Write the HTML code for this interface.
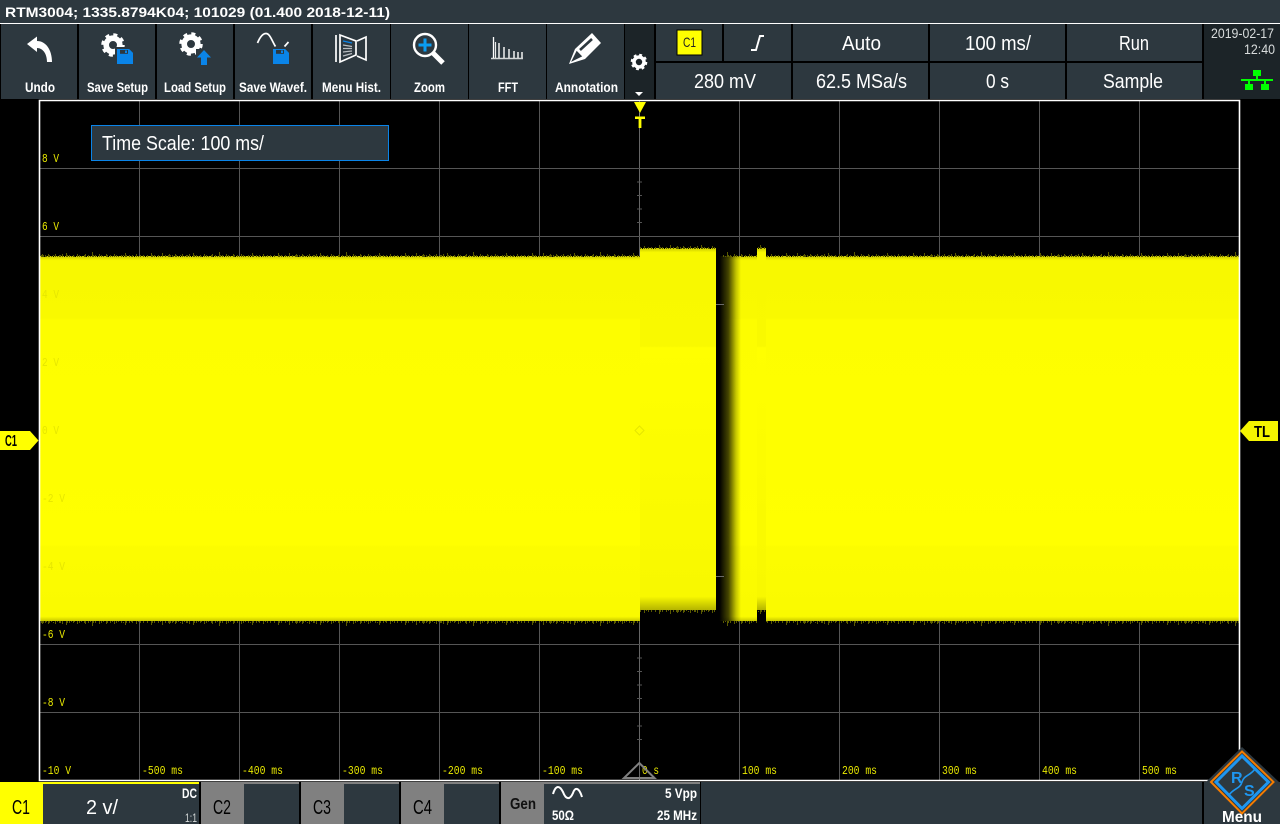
<!DOCTYPE html>
<html><head><meta charset="utf-8"><title>RTM3004</title>
<style>
html,body{margin:0;padding:0;background:#000;width:1280px;height:824px;overflow:hidden}
svg{display:block}
text{font-family:"Liberation Sans",sans-serif;white-space:pre}
.lb{font-size:14px;font-weight:700;fill:#fff}
.v{font-size:20px;fill:#fff}
.s{font-size:12px;fill:#e8e800;font-family:"Liberation Mono","Liberation Sans",monospace}
.ch{font-size:20px;fill:#000}
</style></head><body>
<svg xmlns="http://www.w3.org/2000/svg" width="1280" height="824" viewBox="0 0 1280 824">
<defs>
<linearGradient id="vg" gradientUnits="userSpaceOnUse" x1="0" y1="256" x2="0" y2="622">
<stop offset="0" stop-color="#c8c800"/><stop offset=".012" stop-color="#f8f800"/><stop offset=".17" stop-color="#f9f900"/><stop offset=".175" stop-color="#fdfd00"/><stop offset=".79" stop-color="#ffff00"/><stop offset=".795" stop-color="#fcfc00"/><stop offset=".985" stop-color="#fafa00"/><stop offset="1" stop-color="#c0c000"/>
</linearGradient>
<linearGradient id="vg2" gradientUnits="userSpaceOnUse" x1="0" y1="248" x2="0" y2="611">
<stop offset="0" stop-color="#c8c800"/><stop offset=".012" stop-color="#f8f800"/><stop offset=".27" stop-color="#f9f900"/><stop offset=".275" stop-color="#ffff00"/><stop offset=".96" stop-color="#f8f800"/><stop offset="1" stop-color="#b0b000"/>
</linearGradient>
<linearGradient id="gap" gradientUnits="userSpaceOnUse" x1="716" y1="0" x2="741" y2="0">
<stop offset="0" stop-color="#000"/><stop offset=".14" stop-color="#000"/><stop offset=".5" stop-color="#000" stop-opacity=".72"/><stop offset=".8" stop-color="#000" stop-opacity=".22"/><stop offset="1" stop-color="#000" stop-opacity="0"/>
</linearGradient>
<pattern id="n" patternUnits="userSpaceOnUse" width="127" height="9" x="40" y="0">
<path stroke="#5a5a00" stroke-width="1" fill="none" d="M1.500 7v2M2.500 6v3M3.500 7v2M5.500 7v2M6.500 8v1M8.500 6v3M9.500 7v2M11.500 8v1M13.500 7v2M15.500 6v3M17.500 8v1M19.500 7v2M20.500 7v2M22.500 6v3M24.500 8v1M26.500 5v4M27.500 7v2M29.500 7v2M31.500 8v1M33.500 7v2M34.500 8v1M37.500 6v3M39.500 7v2M41.500 8v1M44.500 7v2M45.500 6v3M48.500 7v2M50.500 8v1M52.500 4v5M53.500 7v2M55.500 7v2M57.500 8v1M59.500 6v3M61.500 7v2M63.500 8v1M66.500 6v3M67.500 7v2M70.500 7v2M72.500 8v1M74.500 6v3M76.500 7v2M78.500 8v1M81.500 7v2M83.500 7v2M85.500 5v4M86.500 7v2M89.500 7v2M91.500 8v1M92.500 7v2M96.500 6v3M98.500 8v1M100.500 7v2M103.500 7v2M105.500 8v1M107.500 7v2M111.500 5v4M112.500 7v2M114.500 7v2M118.500 7v2M120.500 8v1M122.500 5v4M125.500 7v2"/>
<path stroke="#000" stroke-width="1" fill="none" d="M4.500 8v1M13.500 8v1M24.500 7v2M35.500 8v1M46.500 8v1M57.500 7v2M68.500 8v1M83.500 8v1M94.500 7v2M105.500 8v1M116.500 8v1"/>
</pattern>
<g id="disk"><path d="M0 0h12l4 4v11H0z" fill="#0a84e8"/><rect x="3" y="0.8" width="8" height="4" fill="#2d383f"/><rect x="8" y="1.5" width="2" height="2.5" fill="#0a84e8"/><rect x="2" y="7" width="12" height="7" fill="#0a84e8"/><path d="M.5.5h11.3l3.7 3.7v10.3H.5z" fill="none" stroke="#0a84e8"/></g>
</defs>

<rect width="1280" height="824" fill="#000"/>
<!-- top title -->
<rect width="1280" height="23" fill="#2d383f"/>
<rect y="23" width="1280" height="1" fill="#fff"/>
<text x="5" y="17" lengthAdjust="spacingAndGlyphs" textLength="385" style="font-size:14px;font-weight:700;fill:#fff">RTM3004; 1335.8794K04; 101029 (01.400 2018-12-11)</text>

<!-- toolbar -->
<g fill="#2d383f">
<rect x="1" y="24" width="76" height="75"/><rect x="79" y="24" width="76" height="75"/><rect x="157" y="24" width="76" height="75"/><rect x="235" y="24" width="76" height="75"/><rect x="313" y="24" width="77" height="75"/><rect x="391" y="24" width="77" height="75"/><rect x="469" y="24" width="77" height="75"/><rect x="547" y="24" width="77" height="75"/>
<rect x="656" y="24" width="66" height="37"/><rect x="724" y="24" width="67" height="37"/><rect x="793" y="24" width="135" height="37"/><rect x="930" y="24" width="135" height="37"/><rect x="1067" y="24" width="135" height="37"/>
<rect x="656" y="63" width="135" height="36"/><rect x="793" y="63" width="135" height="36"/><rect x="930" y="63" width="135" height="36"/><rect x="1067" y="63" width="135" height="36"/>
</g>
<rect x="625" y="24" width="29" height="75" fill="#1c2428"/>
<rect x="1204" y="24" width="76" height="75" fill="#1c2428"/>

<!-- undo -->
<path d="M27 44 L37 36.500 L37 41 C46 41 52 50 52 62 L47 62 C47 54 43 48 37 48 L37 52 Z" fill="#fff"/>
<text class="lb" x="25" y="92" lengthAdjust="spacingAndGlyphs" textLength="30">Undo</text>
<!-- save setup -->
<circle cx="113" cy="45" r="6.800" fill="none" stroke="#fff" stroke-width="5.600"/>
<circle cx="113" cy="45" r="10.250" fill="none" stroke="#fff" stroke-width="3" stroke-dasharray="4 4.050"/>
<rect x="115" y="47" width="20" height="19" fill="#2d383f"/>
<use href="#disk" x="117" y="49"/>
<text class="lb" x="87" y="92" lengthAdjust="spacingAndGlyphs" textLength="61">Save Setup</text>
<!-- load setup -->
<circle cx="191" cy="44" r="6.800" fill="none" stroke="#fff" stroke-width="5.600"/>
<circle cx="191" cy="44" r="10.250" fill="none" stroke="#fff" stroke-width="3" stroke-dasharray="4 4.050"/>
<rect x="196" y="49" width="16" height="16" fill="#2d383f"/>
<path d="M204 50 L211 57.500 H207 V65 H201 V57.500 H197 Z" fill="#0a84e8"/>
<text class="lb" x="164" y="92" lengthAdjust="spacingAndGlyphs" textLength="62">Load Setup</text>
<!-- save wavef -->
<path d="M257.500 43 C260 37 263 33.500 266 33.500 C270 33.500 272 41 275.500 46.500M284.500 46.500 L288.500 42" fill="none" stroke="#fff" stroke-width="1.700"/>
<use href="#disk" x="273" y="49"/>
<text class="lb" x="239" y="92" lengthAdjust="spacingAndGlyphs" textLength="68">Save Wavef.</text>
<!-- menu hist -->
<g fill="none" stroke="#fff" stroke-width="1.700">
<path d="M336 35V62"/><path d="M340 35L356 41V55L340 62Z"/><path d="M357 41L366 37V60L357 56"/>
</g>
<path d="M343 41l9 2" stroke="#0a84e8" stroke-width="1.400"/>
<path d="M343 45l9 1.500M343 48.500h9M343 52l9-1M343 56l9-2.500" stroke="#b8bcc0" stroke-width="1.200"/>
<text class="lb" x="322" y="92" lengthAdjust="spacingAndGlyphs" textLength="59">Menu Hist.</text>
<!-- zoom -->
<circle cx="425" cy="45" r="11" fill="none" stroke="#fff" stroke-width="2.400"/>
<path d="M425 38.500v13M418.500 45h13" stroke="#0a9cf0" stroke-width="3"/>
<path d="M433 53L443 63" stroke="#fff" stroke-width="5"/>
<text class="lb" x="414" y="92" lengthAdjust="spacingAndGlyphs" textLength="31">Zoom</text>
<!-- fft -->
<path d="M491 58.500h32" stroke="#d0d4d4" stroke-width="1.400"/>
<path d="M493.500 37v21" stroke="#fff" stroke-width="1.300"/><path d="M495.500 42v16" stroke="#e8eaea" stroke-width="1.200"/>
<path d="M499 43v15M504 47v11M509 49v9M514 51v7M518 52v6M522 52v6" stroke="#e4e6e6" stroke-width="1.600"/>
<text class="lb" x="498" y="92" lengthAdjust="spacingAndGlyphs" textLength="20">FFT</text>
<!-- annotation -->
<path d="M569 64 L575 49 L592 33 L601 43 L585 59 Z" fill="#fff"/>
<path d="M580 50 L592 39 M574 59 L577 53 L580 56 Z" stroke="#2d383f" stroke-width="2.600" fill="#2d383f"/>
<text class="lb" x="555" y="92" lengthAdjust="spacingAndGlyphs" textLength="63">Annotation</text>
<!-- gear -->
<circle cx="639" cy="62" r="5" fill="none" stroke="#fff" stroke-width="3.600"/>
<circle cx="639" cy="62" r="7.300" fill="none" stroke="#fff" stroke-width="2" stroke-dasharray="2.900 2.830"/>
<path d="M635 92h8l-4 4z" fill="#fff"/>

<!-- trigger panel -->
<rect x="677" y="30" width="25" height="25" fill="#ffff00" stroke="#000" stroke-width="1"/>
<text x="683" y="47" lengthAdjust="spacingAndGlyphs" textLength="13" style="font-size:14px;fill:#222">C1</text>
<path d="M751 50H756L760 36H764" fill="none" stroke="#fff" stroke-width="1.900"/>
<text class="v" x="842" y="50" lengthAdjust="spacingAndGlyphs" textLength="39">Auto</text>
<text class="v" x="965" y="50" lengthAdjust="spacingAndGlyphs" textLength="66">100 ms/</text>
<text class="v" x="1119" y="50" lengthAdjust="spacingAndGlyphs" textLength="30">Run</text>
<text class="v" x="694" y="88" lengthAdjust="spacingAndGlyphs" textLength="62">280 mV</text>
<text class="v" x="816" y="88" lengthAdjust="spacingAndGlyphs" textLength="91">62.5 MSa/s</text>
<text class="v" x="986" y="88" lengthAdjust="spacingAndGlyphs" textLength="23">0 s</text>
<text class="v" x="1103" y="88" lengthAdjust="spacingAndGlyphs" textLength="60">Sample</text>
<text x="1211" y="38" lengthAdjust="spacingAndGlyphs" textLength="63" style="font-size:14px;fill:#d8dcdc">2019-02-17</text>
<text x="1244" y="54" lengthAdjust="spacingAndGlyphs" textLength="31" style="font-size:14px;fill:#d8dcdc">12:40</text>
<g fill="#00ff00"><rect x="1253" y="70" width="8" height="6"/><rect x="1256" y="76" width="2" height="4"/><rect x="1241" y="79" width="32" height="2"/><rect x="1248" y="81" width="2" height="3"/><rect x="1264" y="81" width="2" height="3"/><rect x="1245" y="84" width="8" height="6"/><rect x="1261" y="84" width="8" height="6"/></g>

<!-- plot grid -->
<g stroke="#555" stroke-width="1">
<path d="M139.500 101V780M239.500 101V780M339.500 101V780M439.500 101V780M539.500 101V780M739.500 101V780M839.500 101V780M939.500 101V780M1039.500 101V780M1139.500 101V780"/>
<path d="M40 168.500H1239M40 236.500H1239M40 304.500H1239M40 372.500H1239M40 508.500H1239M40 576.500H1239M40 644.500H1239M40 712.500H1239"/>
<path d="M40 440.500H1239" stroke-dasharray="1 19"/>
<path d="M639.500 101V780" stroke="#666"/>
</g>
<path d="M637 168.500h5M637 236.500h5M637 644.500h5M637 712.500h5M637 182h5M637 195.500h5M637 209h5M637 222.500h5M637 658h5M637 671.500h5M637 685h5M637 698.500h5M637 726h5M637 739.500h5" stroke="#555"/>

<!-- waveform -->
<rect x="40" y="256" width="600" height="365" fill="url(#vg)"/>
<rect x="716" y="256" width="41" height="365" fill="url(#vg)"/>
<rect x="766" y="256" width="474" height="365" fill="url(#vg)"/>
<rect x="640" y="248" width="76" height="362" fill="url(#vg2)"/>
<rect x="757" y="248" width="9" height="362" fill="url(#vg2)"/>
<rect x="757" y="610" width="9" height="13" fill="#000"/>
<rect x="716" y="256" width="26" height="366" fill="url(#gap)"/>
<path d="M716 304.500h8M716 576.500h8" stroke="#6a6a6a"/>
<g transform="translate(0,248)"><rect x="40" y="0" width="600" height="9" fill="url(#n)"/><rect x="722" y="0" width="35" height="9" fill="url(#n)"/><rect x="766" y="0" width="474" height="9" fill="url(#n)"/></g>
<g transform="translate(0,240)"><rect x="640" y="0" width="76" height="9" fill="url(#n)"/><rect x="757" y="0" width="9" height="9" fill="url(#n)"/></g>
<g transform="translate(0,630) scale(1,-1)"><rect x="40" y="0" width="600" height="9" fill="url(#n)"/><rect x="722" y="0" width="35" height="9" fill="url(#n)"/><rect x="766" y="0" width="474" height="9" fill="url(#n)"/></g>
<g transform="translate(0,619) scale(1,-1)"><rect x="640" y="0" width="76" height="9" fill="url(#n)"/><rect x="757" y="0" width="9" height="9" fill="url(#n)"/></g>

<!-- plot labels -->
<text class="s" x="42" y="162" lengthAdjust="spacingAndGlyphs" textLength="17">8 V</text>
<text class="s" x="42" y="230" lengthAdjust="spacingAndGlyphs" textLength="17">6 V</text>
<text class="s" x="42" y="298" lengthAdjust="spacingAndGlyphs" textLength="17" style="fill:#e6e600">4 V</text>
<text class="s" x="42" y="366" lengthAdjust="spacingAndGlyphs" textLength="17" style="fill:#e6e600">2 V</text>
<text class="s" x="42" y="434" lengthAdjust="spacingAndGlyphs" textLength="17" style="fill:#e6e600">0 V</text>
<text class="s" x="42" y="502" lengthAdjust="spacingAndGlyphs" textLength="23" style="fill:#e6e600">-2 V</text>
<text class="s" x="42" y="570" lengthAdjust="spacingAndGlyphs" textLength="23" style="fill:#e6e600">-4 V</text>
<text class="s" x="42" y="638" lengthAdjust="spacingAndGlyphs" textLength="23">-6 V</text>
<text class="s" x="42" y="706" lengthAdjust="spacingAndGlyphs" textLength="23">-8 V</text>
<text class="s" x="42" y="774" lengthAdjust="spacingAndGlyphs" textLength="29">-10 V</text>
<text class="s" x="142" y="774" lengthAdjust="spacingAndGlyphs" textLength="41">-500 ms</text>
<text class="s" x="242" y="774" lengthAdjust="spacingAndGlyphs" textLength="41">-400 ms</text>
<text class="s" x="342" y="774" lengthAdjust="spacingAndGlyphs" textLength="41">-300 ms</text>
<text class="s" x="442" y="774" lengthAdjust="spacingAndGlyphs" textLength="41">-200 ms</text>
<text class="s" x="542" y="774" lengthAdjust="spacingAndGlyphs" textLength="41">-100 ms</text>
<text class="s" x="642" y="774" lengthAdjust="spacingAndGlyphs" textLength="17">0 s</text>
<text class="s" x="742" y="774" lengthAdjust="spacingAndGlyphs" textLength="35">100 ms</text>
<text class="s" x="842" y="774" lengthAdjust="spacingAndGlyphs" textLength="35">200 ms</text>
<text class="s" x="942" y="774" lengthAdjust="spacingAndGlyphs" textLength="35">300 ms</text>
<text class="s" x="1042" y="774" lengthAdjust="spacingAndGlyphs" textLength="35">400 ms</text>
<text class="s" x="1142" y="774" lengthAdjust="spacingAndGlyphs" textLength="35">500 ms</text>
<path d="M635 430.500l4.500-4.500l4.500 4.500l-4.500 4.500z" fill="none" stroke="#e6e600"/>

<!-- plot border -->
<path d="M39.500 100.500H1239.500V780.500H39.500Z" fill="none" stroke="#fff" stroke-width="1.600"/>

<!-- trigger markers -->
<path d="M634 102h12l-6 11z" fill="#ffff00"/>
<path d="M635 116.500h10v2.500h-3.600v9h-2.800v-9H635z" fill="#ffff00"/>
<path d="M639.500 113v3" stroke="#888"/>
<path d="M639.300 763 L654.500 778 H624 Z" fill="none" stroke="#808080" stroke-width="2"/>

<!-- C1 / TL -->
<path d="M0 431H30L38.500 440.500L30 450H0Z" fill="#ffff00"/>
<text x="5" y="446" lengthAdjust="spacingAndGlyphs" textLength="12" style="font-size:16px;font-weight:700;fill:#000">C1</text>
<path d="M1240 431L1249 421H1278V441H1249Z" fill="#f5f500"/>
<text x="1254" y="437" lengthAdjust="spacingAndGlyphs" textLength="16" style="font-size:16px;font-weight:700;fill:#000">TL</text>

<!-- time scale box -->
<rect x="91.500" y="125.500" width="297" height="35" fill="#2d383f" stroke="#0a84e8"/>
<text class="v" x="102" y="150" lengthAdjust="spacingAndGlyphs" textLength="162">Time Scale: 100 ms/</text>

<!-- bottom bar -->
<rect x="0" y="782" width="1280" height="42" fill="#2d383f"/>
<rect x="0" y="782" width="43" height="42" fill="#ffff00"/>
<rect x="43" y="782" width="156" height="2" fill="#ffff00"/>
<g fill="#000"><rect x="199" y="782" width="2" height="42"/><rect x="299" y="782" width="2" height="42"/><rect x="399" y="782" width="2" height="42"/><rect x="499" y="782" width="2" height="42"/><rect x="700" y="782" width="1" height="42"/><rect x="1202" y="782" width="2" height="42"/></g>
<g fill="#808080">
<rect x="201" y="782" width="43" height="42"/><rect x="244" y="782" width="55" height="2"/>
<rect x="301" y="782" width="43" height="42"/><rect x="344" y="782" width="55" height="2"/>
<rect x="401" y="782" width="43" height="42"/><rect x="444" y="782" width="55" height="2"/>
<rect x="501" y="782" width="43" height="42"/><rect x="544" y="782" width="156" height="2"/>
</g>
<text class="ch" x="12" y="814" lengthAdjust="spacingAndGlyphs" textLength="18">C1</text>
<text class="v" x="86" y="814" lengthAdjust="spacingAndGlyphs" textLength="32">2 v/</text>
<text x="182" y="798" lengthAdjust="spacingAndGlyphs" textLength="15" style="font-size:14px;font-weight:700;fill:#fff">DC</text>
<text x="185" y="822" lengthAdjust="spacingAndGlyphs" textLength="12" style="font-size:12px;fill:#d8dcdc">1:1</text>
<text class="ch" x="213" y="814" lengthAdjust="spacingAndGlyphs" textLength="18">C2</text>
<text class="ch" x="313" y="814" lengthAdjust="spacingAndGlyphs" textLength="18">C3</text>
<text class="ch" x="413" y="814" lengthAdjust="spacingAndGlyphs" textLength="19">C4</text>
<text x="510" y="809" lengthAdjust="spacingAndGlyphs" textLength="26" style="font-size:16px;font-weight:700;fill:#111">Gen</text>
<path d="M553 794 C556 784 560 786 563 792 C566 800 570 800 573 793 C575 787 579 787 582 797" fill="none" stroke="#fff" stroke-width="2"/>
<text x="552" y="820" lengthAdjust="spacingAndGlyphs" textLength="22" style="font-size:14px;font-weight:700;fill:#fff">50Ω</text>
<text x="665" y="798" lengthAdjust="spacingAndGlyphs" textLength="32" style="font-size:14px;font-weight:700;fill:#fff">5 Vpp</text>
<text x="657" y="820" lengthAdjust="spacingAndGlyphs" textLength="40" style="font-size:14px;font-weight:700;fill:#fff">25 MHz</text>

<!-- logo -->
<path d="M1242 747L1279 782L1242 819L1206 782Z" fill="#2d383f"/>
<path d="M1242 751.500L1273.500 782L1242 813.500L1211 782Z" fill="none" stroke="#f57c00" stroke-width="2"/>
<path d="M1242 756L1268.500 782L1242 808.500L1216 782Z" fill="none" stroke="#1e96f0" stroke-width="3"/>
<path d="M1229 795C1234 788 1240 789 1242 782C1244 775 1250 776 1255 769" fill="none" stroke="#1e96f0" stroke-width="1.600"/>
<text x="1231" y="783" style="font-size:16px;font-weight:700;fill:#1e96f0">R</text>
<text x="1244" y="796" style="font-size:16px;font-weight:700;fill:#1e96f0">S</text>
<text x="1222" y="822" lengthAdjust="spacingAndGlyphs" textLength="40" style="font-size:16px;font-weight:700;fill:#fff">Menu</text>
</svg>
</body></html>
